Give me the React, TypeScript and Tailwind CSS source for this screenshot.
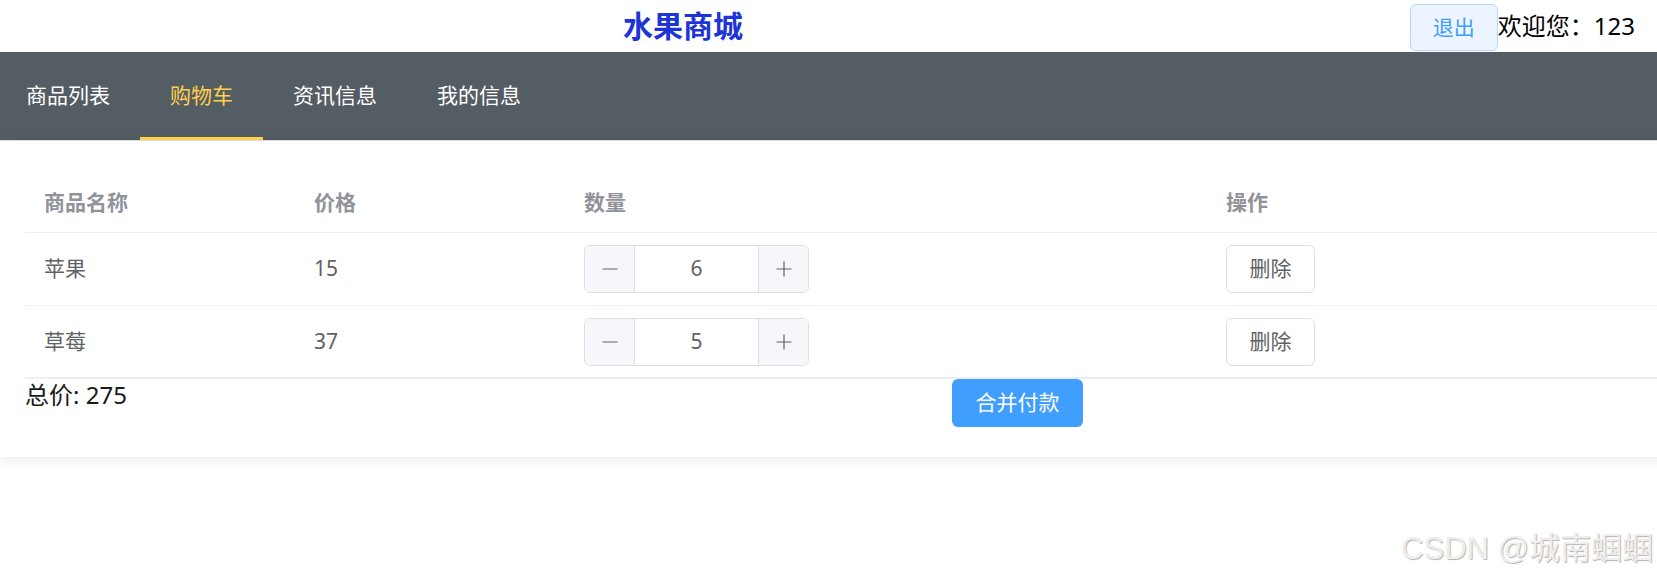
import React from 'react'

const font = { fontFamily: '"Noto Sans", "Noto Sans CJK SC", sans-serif' }

interface CartItem {
    name: string;
    price: number;
    count: number;
}

const items: CartItem[] = [
    { name: '苹果', price: 15, count: 6 },
    { name: '草莓', price: 37, count: 5 },
]

const NumberInput: React.FC<{ value: number }> = ({ value }) => {
    return (
        <div className="flex w-[225px] h-[48px] border border-[#dcdfe6] rounded-[6px] overflow-hidden">
            <div className="w-[50px] h-full bg-[#f5f7fa] border-r border-[#dcdfe6] flex items-center justify-center">
                <svg width="16" height="16" viewBox="0 0 16 16">
                    <line x1="0.5" y1="8" x2="15.5" y2="8" stroke="#606266" strokeWidth="1.2" />
                </svg>
            </div>
            <div className="flex-1 h-full flex items-center justify-center text-[21px] text-[#606266]">{value}</div>
            <div className="w-[50px] h-full bg-[#f5f7fa] border-l border-[#dcdfe6] flex items-center justify-center">
                <svg width="16" height="16" viewBox="0 0 16 16">
                    <line x1="0.5" y1="8" x2="15.5" y2="8" stroke="#606266" strokeWidth="1.2" />
                    <line x1="8" y1="0.5" x2="8" y2="15.5" stroke="#606266" strokeWidth="1.2" />
                </svg>
            </div>
        </div>
    )
}

export default function App() {
    const navs = ['商品列表', '购物车', '资讯信息', '我的信息']
    const total = items.reduce((s, i) => s + i.price * i.count, 0)

    return (
        <div className="relative w-full h-[586px] bg-white overflow-hidden" style={font}>
            {/* top bar */}
            <div className="flex items-center h-[52px] pr-[22px]">
                <h3 className="ml-[623px] text-[30px] font-bold text-[#1d35d6] leading-none">水果商城</h3>
                <div className="flex-1" />
                <button className="w-[88px] h-[47px] mt-[3px] rounded-[6px] border border-[#b3d8ff] bg-[#ecf5ff] text-[#409eff] text-[21px]">
                    退出
                </button>
                <span className="text-[24px] text-black">欢迎您：123</span>
            </div>

            {/* menu */}
            <div className="h-[89px] bg-[#545c64] border-b border-[#e6e6e6] flex">
                <div className="flex -ml-[4px] h-[88px]">
                    {navs.map((n, i) => (
                        <div
                            key={n}
                            className={
                                i === 1
                                    ? 'h-full px-[30px] flex items-center text-[21px] text-[#ffd04b] border-b-[3px] border-[#ffd04b] pt-[3px]'
                                    : 'h-full px-[30px] flex items-center text-[21px] text-white'
                            }
                        >
                            {n}
                        </div>
                    ))}
                </div>
            </div>

            {/* card */}
            <div className="w-[1700px] bg-white shadow-[0_2px_12px_0_rgba(0,0,0,0.1)] pl-[25px] pt-[19px] pb-[30px]">
                <div className="border-b-2 border-[#ebeef5]">
                    <div className="flex h-[73px] pt-[14px] items-center border-b border-[#ebeef5] text-[21px] font-bold text-[#909399]">
                        <div className="w-[270px] pl-[19px]">商品名称</div>
                        <div className="w-[270px] pl-[19px]">价格</div>
                        <div className="w-[642px] pl-[19px]">数量</div>
                        <div className="pl-[19px]">操作</div>
                    </div>
                    {items.map((it, idx) => (
                        <div
                            key={it.name}
                            className={
                                idx === items.length - 1
                                    ? 'flex h-[71px] items-center text-[21px] text-[#606266]'
                                    : 'flex h-[73px] items-center border-b border-[#ebeef5] text-[21px] text-[#606266]'
                            }
                        >
                            <div className="w-[270px] pl-[19px]">{it.name}</div>
                            <div className="w-[270px] pl-[19px]">{it.price}</div>
                            <div className="w-[642px] pl-[19px]">
                                <NumberInput value={it.count} />
                            </div>
                            <div className="pl-[19px]">
                                <button className="w-[89px] h-[48px] rounded-[6px] border border-[#dcdfe6] bg-white text-[21px] text-[#606266]">
                                    删除
                                </button>
                            </div>
                        </div>
                    ))}
                </div>
                <div className="flex items-start">
                    <div className="w-[927px] text-[24px] leading-[32px] text-[#1a1a1a]">总价: {total}</div>
                    <button className="w-[131px] h-[48px] rounded-[6px] bg-[#409eff] text-white text-[21px]">合并付款</button>
                </div>
            </div>

            {/* watermark */}
            <div
                className="absolute right-[4px] bottom-[14px] text-[31px] text-[#eeeeee] [text-shadow:1px_1px_1px_#b4b4b4]"
                style={{ fontFamily: '"Liberation Sans", "Noto Sans CJK SC", sans-serif' }}
            >
                CSDN @城南蝈蝈
            </div>
        </div>
    )
}
